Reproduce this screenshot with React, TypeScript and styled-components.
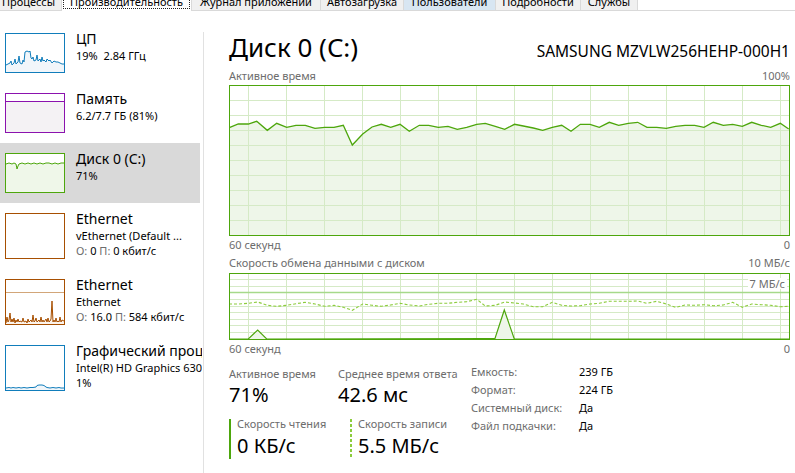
import React from "react";
import styled, { createGlobalStyle } from "styled-components";

const GlobalStyle = createGlobalStyle`
  html, body { margin: 0; padding: 0; background: #fff; }
  body { font-family: "Noto Sans", "Segoe UI", sans-serif; color: #000; }
  * { box-sizing: border-box; }
`;

const GREEN = "#4da60c";
const GRID = "#d5eac6";
const FILL = "#eef6e9";
const GRAY = "#6d6d6d";

const Window = styled.div`
  width: 795px;
  height: 473px;
  overflow: hidden;
  display: flex;
  flex-direction: column;
  background: #fff;
`;

const TabStrip = styled.div`
  height: 11px;
  flex-shrink: 0;
  display: flex;
  align-items: flex-end;
  overflow: hidden;
  box-shadow: inset 0 -1px 0 #d9d9d9;
`;

const Tab = styled.div<{ $w: number; $active?: boolean; $hot?: boolean }>`
  width: ${(p) => p.$w}px;
  flex-shrink: 0;
  height: ${(p) => (p.$active ? 17 : 16)}px;
  margin-bottom: ${(p) => (p.$active ? 0 : 1)}px;
  margin-left: -1px;
  display: flex;
  align-items: flex-end;
  justify-content: center;
  padding-bottom: 2px;
  background: ${(p) => (p.$active ? "#fff" : p.$hot ? "#d8e6f2" : "#f0f0f0")};
  border-left: 1px solid #d9d9d9;
  border-right: 1px solid #d9d9d9;
  font-size: 11px;
  line-height: 12px;
  white-space: nowrap;
  &:first-child {
    margin-left: -5px;
  }
`;

const FocusLabel = styled.span`
  flex: 1;
  margin: 0 1px;
  text-align: center;
  border: 1px dotted #222;
  line-height: 12px;
`;

const Body = styled.div`
  flex: 1;
  display: flex;
  min-height: 0;
`;

const Sidebar = styled.nav`
  width: 202px;
  flex-shrink: 0;
  padding-top: 12px;
  overflow: hidden;
  display: flex;
  flex-direction: column;
`;

const SideItem = styled.div<{ $selected?: boolean }>`
  width: 200px;
  display: flex;
  align-items: flex-start;
  gap: 11px;
  padding: 10px 0 10px 5px;
  background: ${(p) => (p.$selected ? "#d9d9d9" : "transparent")};
`;

const Thumb = styled.div<{ $color: string; $h: number }>`
  width: 60px;
  height: ${(p) => p.$h}px;
  flex-shrink: 0;
  border: 1px solid ${(p) => p.$color};
  background: #fff;
`;

const ThumbSvg = styled.svg`
  display: block;
`;

const SideText = styled.div`
  margin-top: -3px;
  flex-shrink: 0;
  white-space: nowrap;
`;

const SideTitle = styled.div`
  font-size: 14px;
  line-height: 18px;
`;

const SideSub = styled.div`
  font-size: 11px;
  line-height: 15px;
`;

const Dim = styled.span`
  color: ${GRAY};
`;

const Divider = styled.div`
  width: 1px;
  margin: 21px 0 0 1px;
  background: #e1e1e1;
  flex-shrink: 0;
`;

const Main = styled.main`
  flex: 1;
  min-width: 0;
  padding: 19px 5px 0 25px;
  display: flex;
  flex-direction: column;
`;

const HeaderRow = styled.div`
  display: flex;
  justify-content: space-between;
  align-items: baseline;
`;

const DiskTitle = styled.h1`
  margin: 0;
  font-weight: 400;
  font-size: 26px;
  line-height: 34px;
`;

const Model = styled.div`
  font-size: 15.5px;
`;

const CaptionRow = styled.div<{ $mt: number }>`
  display: flex;
  justify-content: space-between;
  font-size: 11px;
  line-height: 15px;
  color: ${GRAY};
  margin-top: ${(p) => p.$mt}px;
`;

const ChartFrame = styled.div<{ $mt: number }>`
  position: relative;
  margin-top: ${(p) => p.$mt}px;
`;

const ChartSvg = styled.svg`
  display: block;
`;

const ScaleTag = styled.span`
  position: absolute;
  top: 5px;
  right: 3px;
  padding: 0 2px;
  background: #fff;
  font-size: 11px;
  line-height: 11px;
  color: ${GRAY};
`;

const Stats = styled.section`
  display: flex;
  align-items: flex-start;
  margin-top: 7px;
`;

const StatsLeft = styled.div`
  width: 242px;
  flex-shrink: 0;
  padding-top: 3px;
`;

const StatRow = styled.div<{ $mt?: number }>`
  display: flex;
  margin-top: ${(p) => p.$mt ?? 0}px;
`;

const Stat = styled.div<{ $w?: number }>`
  width: ${(p) => (p.$w ? `${p.$w}px` : "auto")};
  flex-shrink: 0;
`;

const StatLabel = styled.div`
  font-size: 11px;
  line-height: 15px;
  color: ${GRAY};
  white-space: nowrap;
`;

const StatValue = styled.div`
  font-size: 20px;
  line-height: 26px;
  margin-top: 1px;
  white-space: nowrap;
`;

const Rate = styled.div<{ $w?: number; $dashed?: boolean }>`
  position: relative;
  width: ${(p) => (p.$w ? `${p.$w}px` : "auto")};
  flex-shrink: 0;
  padding-left: 8px;
  &::before {
    content: "";
    position: absolute;
    left: 0;
    top: 1px;
    bottom: 1px;
    width: 2px;
    background: ${(p) =>
      p.$dashed
        ? "repeating-linear-gradient(to bottom, #8ccc3c 0 3px, transparent 3px 5px)"
        : GREEN};
  }
`;

const RateLabel = styled.div`
  font-size: 11px;
  line-height: 12px;
  color: ${GRAY};
  white-space: nowrap;
`;

const RateValue = styled.div`
  font-size: 20px;
  line-height: 28px;
  margin-top: 2px;
  white-space: nowrap;
`;

const InfoGrid = styled.div`
  display: grid;
  grid-template-columns: 108px auto;
  grid-auto-rows: 18px;
  align-content: start;
  font-size: 11px;
  line-height: 18px;
`;

const InfoKey = styled.div`
  color: ${GRAY};
  white-space: nowrap;
`;

const InfoVal = styled.div`
  white-space: nowrap;
`;

type Pt = [number, number];
const pts = (a: Pt[]) => a.map(([x, y]) => `${x},${y}`).join(" ");

const ACTIVE: Pt[] = [
  [0.3, 42.7], [9.3, 39], [19.3, 39], [27.7, 36.3], [38.3, 45.3], [47.7, 38.3],
  [57.7, 42.3], [67, 40.3], [76.3, 40.3], [86, 43.3], [95.7, 42.3], [105, 42.3],
  [114.3, 40.3], [123.3, 60], [133.7, 49], [143, 42], [152.3, 39.3], [161.7, 42.3],
  [171, 39.3], [180.3, 46.3], [190.3, 40.3], [199.7, 40.3], [209.3, 42.3], [219, 41.3],
  [228.3, 44.3], [237.7, 42.3], [247.7, 39.3], [256.3, 38.3], [266.3, 41.3], [275.7, 44.3],
  [285.5, 39.3], [294.3, 41], [304.3, 43], [313.7, 45.3], [323.3, 42.3], [332.7, 40.3],
  [342, 46.3], [351.3, 39.3], [361, 39.3], [370.3, 42.3], [380.3, 37.3], [389.7, 40.3],
  [399.3, 38.3], [408.7, 37.3], [418, 42.3], [427.7, 42.3], [437.3, 43.3], [446.7, 41.3],
  [456, 40.3], [465.7, 40.3], [475, 42.3], [484.3, 37.3], [494.3, 40.3], [503.7, 39.3],
  [513.3, 41.3], [522.7, 37.3], [532.3, 40.3], [541.7, 42.3], [551.3, 38.3], [559.7, 44],
];

const WRITE: Pt[] = [
  [0, 31], [9.3, 31], [19.3, 30.3], [28.7, 29], [38.3, 32.3], [47.7, 33.3], [57.7, 32.3],
  [67, 30.7], [76.3, 29.3], [86, 31], [95.7, 33.3], [105, 32.3], [114.3, 34.3], [123.3, 37.3],
  [133.7, 31], [143, 32.3], [152.3, 33.3], [161.7, 32], [171, 30.3], [180.3, 32], [190.3, 33],
  [199.7, 31.3], [209.3, 30.3], [219, 30.3], [228.3, 29.3], [237.7, 28.7], [247.7, 26.3],
  [256.3, 33], [266.3, 32.3], [275.7, 29], [285.5, 30], [294.3, 31], [304.3, 33.7], [313.7, 33.7],
  [323.3, 29.3], [332.7, 32.3], [342, 33], [351.3, 32.7], [361, 31], [370.3, 30.3], [380.3, 28.3],
  [389.7, 28.3], [399.3, 28.3], [408.7, 28], [418, 30.3], [427.7, 28.3], [437.3, 31], [446.7, 34.3],
  [456, 32], [465.7, 32.3], [475, 31.7], [484.3, 32.7], [494.3, 32], [503.7, 29.3], [513.3, 34.3],
  [522.7, 31], [532.3, 31.7], [541.7, 32.3], [551.3, 33.7], [559.7, 33.3],
];

const READ: Pt[] = [
  [0, 66], [19.3, 66], [28.7, 57], [37.7, 66], [259.3, 65.5], [266, 65.5], [275.3, 37],
  [285.3, 66], [560, 66],
];

const VX = Array.from({ length: 15 }, (_, k) => 19.5 + 38 * k);

function ActivityChart() {
  const hy = Array.from({ length: 9 }, (_, k) => 15 * (k + 1) + 0.5);
  return (
    <ChartSvg width={561} height={151} viewBox="0 0 561 151">
      <rect x={0} y={0} width={561} height={151} fill="#fff" />
      <polygon points={`0,150 ${pts(ACTIVE)} 560,150`} fill={FILL} />
      {VX.map((x) => (
        <line key={`v${x}`} x1={x} y1={0} x2={x} y2={151} stroke={GRID} />
      ))}
      {hy.map((y) => (
        <line key={`h${y}`} x1={0} y1={y} x2={561} y2={y} stroke={GRID} />
      ))}
      <polyline points={pts(ACTIVE)} fill="none" stroke={GREEN} strokeWidth={1.3} />
      <rect x={0.5} y={0.5} width={560} height={150} fill="none" stroke={GREEN} />
    </ChartSvg>
  );
}

function TransferChart() {
  const hy = Array.from({ length: 9 }, (_, k) => Math.floor(6.6 * (k + 1)) + 0.5);
  return (
    <ChartSvg width={561} height={67} viewBox="0 0 561 67">
      <rect x={0} y={0} width={561} height={67} fill="#fff" />
      {VX.map((x) => (
        <line key={`v${x}`} x1={x} y1={0} x2={x} y2={67} stroke={GRID} />
      ))}
      {hy.map((y) => (
        <line
          key={`h${y}`}
          x1={0}
          y1={y}
          x2={561}
          y2={y}
          stroke={y === 19.5 ? "#a6d98a" : GRID}
          strokeWidth={y === 19.5 ? 1.3 : 1}
        />
      ))}
      <polygon points={pts(READ)} fill={FILL} />
      <polyline points={pts(READ)} fill="none" stroke={GREEN} strokeWidth={1.2} />
      <polyline points={pts(WRITE)} fill="none" stroke="#8ccc3c" strokeWidth={1.1} strokeDasharray="3 2" />
      <rect x={0.5} y={0.5} width={560} height={66} fill="none" stroke={GREEN} />
    </ChartSvg>
  );
}

const CPU: Pt[] = [
  [0, 31], [2, 30], [4, 29], [5, 27], [6, 31], [8, 29], [9, 25], [10, 30], [12, 28], [13, 22],
  [14, 29], [16, 30], [17, 26], [18, 28], [19, 18], [21, 17], [23, 18], [24, 17], [25, 24],
  [26, 25], [27, 23], [28, 27], [30, 26], [31, 21], [32, 27], [34, 25], [35, 28], [36, 23],
  [37, 27], [38, 26], [40, 28], [41, 25], [43, 27], [44, 26], [46, 29], [48, 27], [50, 28],
  [52, 28], [54, 29], [56, 30], [58, 30],
];

const DISK: Pt[] = [
  [0, 10], [3, 9], [6, 10], [8, 9], [10, 10], [11, 15], [12, 12], [13, 10], [16, 9], [19, 10],
  [22, 9], [25, 10], [28, 9], [31, 10], [34, 9], [37, 10], [40, 9], [43, 9], [46, 10], [49, 9],
  [52, 10], [55, 9], [58, 9],
];

const ETH: Pt[] = [
  [0, 43], [1, 37], [2, 42], [3, 40], [4, 33], [5, 42], [6, 39], [7, 42], [8, 38], [9, 43],
  [10, 40], [11, 42], [12, 39], [13, 42], [14, 41], [16, 42], [17, 38], [18, 42], [20, 41],
  [21, 43], [22, 39], [23, 42], [25, 40], [26, 42], [27, 35], [28, 42], [29, 41], [30, 38],
  [31, 42], [33, 40], [34, 42], [35, 37], [36, 42], [37, 40], [38, 42], [40, 39], [41, 42],
  [42, 38], [43, 42], [44, 41], [45, 39], [46, 21], [47, 42], [48, 40], [49, 42], [50, 38],
  [51, 42], [52, 41], [53, 42], [54, 37], [55, 42], [56, 40], [58, 41],
];

const GPU: Pt[] = [
  [0, 42], [3, 41.5], [5, 42], [7, 41.5], [10, 42], [13, 41.5], [15, 42], [18, 41.5], [21, 42],
  [24, 41.5], [27, 41.5], [30, 41], [31, 39.5], [33, 39], [36, 39], [38, 39.5], [40, 41], [41, 41.5],
  [44, 42], [47, 41.5], [50, 42], [53, 41.5], [55, 42], [58, 42],
];

type Kind = "cpu" | "mem" | "disk" | "eth0" | "eth1" | "gpu";

function ThumbGraph({ kind, h }: { kind: Kind; h: number }) {
  const ih = h - 2;
  const area = (d: Pt[], fill: string, stroke: string) => (
    <>
      <polygon points={`0,${ih} ${pts(d)} 58,${ih}`} fill={fill} />
      <polyline points={pts(d)} fill="none" stroke={stroke} strokeWidth={1} />
    </>
  );
  return (
    <ThumbSvg width={58} height={ih} viewBox={`0 0 58 ${ih}`}>
      {kind === "cpu" && area(CPU, "#f1f6fa", "#117dbb")}
      {kind === "mem" && (
        <>
          <rect x={0} y={7} width={58} height={ih - 7} fill="#f4f2f4" />
          <line x1={0} y1={7.5} x2={58} y2={7.5} stroke="#8b12ae" />
        </>
      )}
      {kind === "disk" && area(DISK, "#eff7e9", GREEN)}
      {kind === "eth1" && (
        <>
          <line x1={0} y1={12.5} x2={58} y2={12.5} stroke="#d2a679" />
          {area(ETH, "#fcf3eb", "#a74f01")}
        </>
      )}
      {kind === "gpu" && area(GPU, "#f1f6fa", "#117dbb")}
    </ThumbSvg>
  );
}

type Item = {
  kind: Kind;
  title: string;
  color: string;
  h: number;
  lines: React.ReactNode[];
  selected?: boolean;
};

const ITEMS: Item[] = [
  { kind: "cpu", title: "ЦП", color: "#117dbb", h: 40, lines: ["19%\u00a0 2.84 ГГц"] },
  { kind: "mem", title: "Память", color: "#8b12ae", h: 40, lines: ["6.2/7.7 ГБ (81%)"] },
  { kind: "disk", title: "Диск 0 (C:)", color: GREEN, h: 40, lines: ["71%"], selected: true },
  {
    kind: "eth0",
    title: "Ethernet",
    color: "#a74f01",
    h: 46,
    lines: [
      "vEthernet (Default ...",
      <>
        <Dim>О:</Dim> 0 <Dim>П:</Dim> 0 кбит/с
      </>,
    ],
  },
  {
    kind: "eth1",
    title: "Ethernet",
    color: "#a74f01",
    h: 46,
    lines: [
      "Ethernet",
      <>
        <Dim>О:</Dim> 16.0 <Dim>П:</Dim> 584 кбит/с
      </>,
    ],
  },
  {
    kind: "gpu",
    title: "Графический процессор 0",
    color: "#117dbb",
    h: 46,
    lines: ["Intel(R) HD Graphics 630", "1%"],
  },
];

const TABS: { label: string; w: number; active?: boolean; hot?: boolean }[] = [
  { label: "Процессы", w: 67 },
  { label: "Производительность", w: 131, active: true },
  { label: "Журнал приложений", w: 130 },
  { label: "Автозагрузка", w: 84 },
  { label: "Пользователи", w: 93, hot: true },
  { label: "Подробности", w: 86 },
  { label: "Службы", w: 58 },
];

export default function App() {
  return (
    <>
      <GlobalStyle />
      <Window>
        <TabStrip>
          {TABS.map((t) => (
            <Tab key={t.label} $w={t.w} $active={t.active} $hot={t.hot}>
              {t.active ? <FocusLabel>{t.label}</FocusLabel> : t.label}
            </Tab>
          ))}
        </TabStrip>
        <Body>
          <Sidebar>
            {ITEMS.map((it, i) => (
              <SideItem key={i} $selected={it.selected}>
                <Thumb $color={it.color} $h={it.h}>
                  <ThumbGraph kind={it.kind} h={it.h} />
                </Thumb>
                <SideText>
                  <SideTitle>{it.title}</SideTitle>
                  {it.lines.map((l, j) => (
                    <SideSub key={j}>{l}</SideSub>
                  ))}
                </SideText>
              </SideItem>
            ))}
          </Sidebar>
          <Divider />
          <Main>
            <HeaderRow>
              <DiskTitle>Диск 0 (C:)</DiskTitle>
              <Model>SAMSUNG MZVLW256HEHP-000H1</Model>
            </HeaderRow>
            <CaptionRow $mt={4}>
              <span>Активное время</span>
              <span>100%</span>
            </CaptionRow>
            <ChartFrame $mt={2}>
              <ActivityChart />
            </ChartFrame>
            <CaptionRow $mt={1}>
              <span>60 секунд</span>
              <span>0</span>
            </CaptionRow>
            <CaptionRow $mt={3}>
              <span>Скорость обмена данными с диском</span>
              <span>10 МБ/с</span>
            </CaptionRow>
            <ChartFrame $mt={3}>
              <TransferChart />
              <ScaleTag>7 МБ/с</ScaleTag>
            </ChartFrame>
            <CaptionRow $mt={1}>
              <span>60 секунд</span>
              <span>0</span>
            </CaptionRow>
            <Stats>
              <StatsLeft>
                <StatRow>
                  <Stat $w={109}>
                    <StatLabel>Активное время</StatLabel>
                    <StatValue>71%</StatValue>
                  </Stat>
                  <Stat>
                    <StatLabel>Среднее время ответа</StatLabel>
                    <StatValue>42.6 мс</StatValue>
                  </Stat>
                </StatRow>
                <StatRow $mt={10}>
                  <Rate $w={121}>
                    <RateLabel>Скорость чтения</RateLabel>
                    <RateValue>0 КБ/с</RateValue>
                  </Rate>
                  <Rate $dashed>
                    <RateLabel>Скорость записи</RateLabel>
                    <RateValue>5.5 МБ/с</RateValue>
                  </Rate>
                </StatRow>
              </StatsLeft>
              <InfoGrid>
                <InfoKey>Емкость:</InfoKey>
                <InfoVal>239 ГБ</InfoVal>
                <InfoKey>Формат:</InfoKey>
                <InfoVal>224 ГБ</InfoVal>
                <InfoKey>Системный диск:</InfoKey>
                <InfoVal>Да</InfoVal>
                <InfoKey>Файл подкачки:</InfoKey>
                <InfoVal>Да</InfoVal>
              </InfoGrid>
            </Stats>
          </Main>
        </Body>
      </Window>
    </>
  );
}
